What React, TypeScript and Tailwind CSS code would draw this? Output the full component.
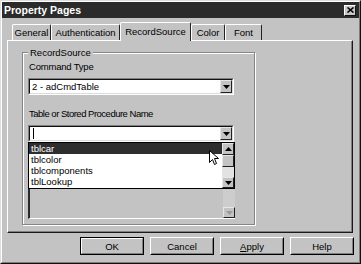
import type { ReactNode } from "react";

type TabProps = {
  label: string;
  width: string;
  selected?: boolean;
};

function Tab({ label, width, selected }: TabProps) {
  if (selected) {
    return (
      <div
        className={`${width} relative -mb-px flex h-[19px] items-start justify-center rounded-t-[2px] border-t border-r border-l border-t-white border-r-[#222] border-l-white bg-[#c3c3c3] pt-[3px]`}
      >
        {label}
      </div>
    );
  }
  return (
    <div
      className={`${width} flex h-[16px] items-center justify-center rounded-t-[2px] border-t border-r border-l border-t-white border-r-[#222] border-l-white pb-px`}
    >
      {label}
    </div>
  );
}

function Arrow({ up, faded }: { up?: boolean; faded?: boolean }) {
  return (
    <svg width="7" height="4" viewBox="0 0 7 4">
      <path
        d={up ? "M3.5 0 L7 4 L0 4 Z" : "M0 0 L7 0 L3.5 4 Z"}
        fill={faded ? "#9a9a9a" : "#000"}
      />
    </svg>
  );
}

function ScrollButton({ up, faded, h }: { up?: boolean; faded?: boolean; h: string }) {
  return (
    <div
      className={`${h} flex w-full items-center justify-center border border-t-[#e6e6e6] border-r-[#222] border-b-[#222] border-l-[#e6e6e6] bg-[#c3c3c3]`}
    >
      <Arrow up={up} faded={faded} />
    </div>
  );
}

function Combo({ children }: { children?: ReactNode }) {
  return (
    <div className="h-[17px] w-[206px] border border-t-[#808080] border-r-white border-b-white border-l-[#808080]">
      <div className="flex h-full items-stretch border border-t-[#111] border-r-[#dcdcdc] border-b-[#dcdcdc] border-l-[#111] bg-white">
        <div className="flex flex-1 items-center pl-[2px]">{children}</div>
        <div className="w-[12px]">
          <ScrollButton h="h-full" />
        </div>
      </div>
    </div>
  );
}

function Button({ label, primary }: { label: ReactNode; primary?: boolean }) {
  return (
    <div className={`h-[18px] w-[64px] border ${primary ? "border-black" : "border-t-white border-r-black border-b-black border-l-white"}`}>
      <div
        className={`flex h-full items-center justify-center border ${primary ? "border-t-white border-r-[#808080] border-b-[#808080] border-l-white" : "border-t-[#c3c3c3] border-r-[#808080] border-b-[#808080] border-l-[#c3c3c3]"}`}
      >
        {label}
      </div>
    </div>
  );
}

export default function App() {
  return (
    <div className="h-[264px] w-[361px] border border-t-[#dedede] border-r-[#111] border-b-[#111] border-l-[#dedede] bg-[#c3c3c3] font-['Liberation_Sans',Arial,sans-serif] text-[9.5px] leading-[11px] text-black">
      <div className="flex h-full flex-col border border-t-white border-r-[#7c7c7c] border-b-[#7c7c7c] border-l-white">
        {/* title bar */}
        <div className="flex h-[16px] items-center justify-between bg-[#2b2b2b] pr-[3px] pl-[2px]">
          <span className="text-[10.5px] font-bold text-white">Property Pages</span>
          <div className="flex h-[11px] w-[12px] items-center justify-center border border-t-white border-r-[#111] border-b-[#111] border-l-white bg-[#c8c8c8]">
            <svg width="7" height="6" viewBox="0 0 7 6">
              <path d="M0.5 0.5 L6.5 5.5 M6.5 0.5 L0.5 5.5" stroke="#000" strokeWidth="1.6" />
            </svg>
          </div>
        </div>

        {/* tabs */}
        <div className="relative z-10 mt-[4px] flex h-[18px] items-end pl-[10px]">
          <Tab label="General" width="w-[39px]" />
          <Tab label="Authentication" width="w-[69px]" />
          <Tab label="RecordSource" width="w-[71px]" selected />
          <Tab label="Color" width="w-[34px]" />
          <Tab label="Font" width="w-[37px]" />
        </div>

        {/* panel */}
        <div className="mr-[6px] ml-[5px] h-[193px] border border-t-white border-r-[#1a1a1a] border-b-[#1a1a1a] border-l-white">
          <div className="h-full border-r border-b border-r-[#808080] border-b-[#808080] pt-[11px] pl-[14px]">
            {/* group box */}
            <div className="relative h-[173px] w-[233px] border border-[#858585] shadow-[1px_1px_0_white]">
              <span className="absolute -top-[6px] left-[5px] bg-[#c3c3c3] px-[2px]">RecordSource</span>
              <div className="h-full border-t border-l border-white pl-[4px]">
                <div className="mt-[7px] pl-[1px] tracking-[-0.2px]">Command Type</div>
                <div className="mt-[6px]">
                  <Combo>2 - adCmdTable</Combo>
                </div>
                <div className="mt-[13px] pl-[1px] tracking-[-0.5px]">Table or Stored Procedure Name</div>
                <div className="mt-[6px]">
                  <Combo>
                    <div className="ml-px h-[11px] w-px bg-black" />
                  </Combo>
                </div>

                {/* listbox underneath and the open dropdown */}
                <div className="relative flex h-[77px] w-[207px] justify-end border-b border-l-2 border-b-white border-l-[#2a2a2a]">
                  <div className="flex w-[12px] flex-col justify-end bg-[#cdcdcd]">
                    <ScrollButton h="h-[11px]" faded />
                  </div>

                  <div className="absolute top-0 -left-[2px] flex h-[47px] w-[207px] border border-black bg-white">
                    <div className="flex-1">
                      <div className="flex h-[11px] items-center bg-[#2e2e2e] pl-[2px] text-white">tblcar</div>
                      <div className="flex h-[11px] items-center pl-[2px]">tblcolor</div>
                      <div className="flex h-[11px] items-center pl-[2px]">tblcomponents</div>
                      <div className="flex h-[11px] items-center pl-[2px]">tblLookup</div>
                    </div>
                    <div className="flex w-[12px] flex-col">
                      <ScrollButton up h="h-[12px]" />
                      <div className="h-[12px] border border-t-[#e6e6e6] border-r-[#222] border-b-[#222] border-l-[#e6e6e6] bg-[#c3c3c3]" />
                      <div className="flex-1 bg-[#e2e2e2]" />
                      <ScrollButton h="h-[11px]" />
                    </div>
                  </div>

                  {/* mouse pointer */}
                  <svg
                    className="absolute top-[8px] left-[179px]"
                    width="12"
                    height="17"
                    viewBox="0 0 12 17"
                  >
                    <path
                      d="M0.5 0.5 L0.5 12.5 L3.5 9.5 L5.5 14.5 L7.5 13.5 L5.5 8.5 L9.5 8.5 Z"
                      fill="#fff"
                      stroke="#000"
                      strokeWidth="1"
                    />
                  </svg>
                </div>
              </div>
            </div>
          </div>
        </div>

        {/* buttons */}
        <div className="mt-[4px] flex justify-end gap-[6px] pr-[5px]">
          <Button label="OK" primary />
          <Button label="Cancel" />
          <Button
            label={
              <span>
                <span className="underline">A</span>pply
              </span>
            }
          />
          <Button label="Help" />
        </div>
      </div>
    </div>
  );
}
